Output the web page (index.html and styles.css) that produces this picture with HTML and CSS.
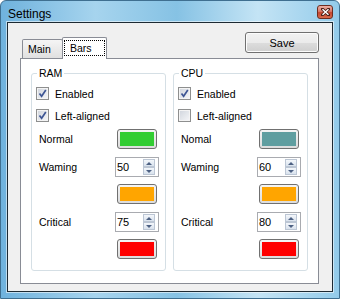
FILE: index.html
```html
<!DOCTYPE html>
<html lang="en">
<head>
  <meta charset="UTF-8" />
  <title>Settings</title>
  <link rel="stylesheet" href="styles.css">
</head>
<body>

  <div class="window">
    <!-- Title Bar -->
    <div class="titlebar">
      <span class="title">Settings</span>
      <span class="close">
        <svg width="9" height="8" viewBox="0 0 9 8">
          <path d="M1.5 1.2 L7.5 6.8 M7.5 1.2 L1.5 6.8" stroke="#4a1c14" stroke-width="3" stroke-linecap="square"/>
          <path d="M1.5 1.2 L7.5 6.8 M7.5 1.2 L1.5 6.8" stroke="#fff" stroke-width="1.5"/>
        </svg>
      </span>
    </div>

    <div class="client">
      <div class="top-row">
        <div class="tabs">
          <div class="tab">Main</div>
          <div class="tab active"><span class="focus">Bars</span></div>
        </div>
        <button class="btn-save">Save</button>
      </div>

      <div class="tab-page">
        <!-- RAM -->
        <fieldset class="group">
          <legend>RAM</legend>
          <div class="group-body">
            <div class="check-row">
              <span class="cb"><svg width="11" height="11" viewBox="0 0 11 11"><path d="M2.5 5.5 L4.6 8.2 L8.8 2" fill="none" stroke="#3d5594" stroke-width="1.7"/></svg></span>
              <span>Enabled</span>
            </div>
            <div class="check-row">
              <span class="cb"><svg width="11" height="11" viewBox="0 0 11 11"><path d="M2.5 5.5 L4.6 8.2 L8.8 2" fill="none" stroke="#3d5594" stroke-width="1.7"/></svg></span>
              <span>Left-aligned</span>
            </div>
            <div class="field">
              <span class="lbl">Normal</span>
              <span class="swatch"><span class="fill green"></span></span>
            </div>
            <div class="field spin-row">
              <span class="lbl">Waming</span>
              <span class="spin"><span class="val">50</span><span class="arrows"><span class="arrow up"></span><span class="arrow down"></span></span></span>
            </div>
            <div class="field">
              <span></span>
              <span class="swatch"><span class="fill orange"></span></span>
            </div>
            <div class="field spin-row">
              <span class="lbl">Critical</span>
              <span class="spin"><span class="val">75</span><span class="arrows"><span class="arrow up"></span><span class="arrow down"></span></span></span>
            </div>
            <div class="field">
              <span></span>
              <span class="swatch"><span class="fill red"></span></span>
            </div>
          </div>
        </fieldset>

        <!-- CPU -->
        <fieldset class="group">
          <legend>CPU</legend>
          <div class="group-body">
            <div class="check-row">
              <span class="cb"><svg width="11" height="11" viewBox="0 0 11 11"><path d="M2.5 5.5 L4.6 8.2 L8.8 2" fill="none" stroke="#3d5594" stroke-width="1.7"/></svg></span>
              <span>Enabled</span>
            </div>
            <div class="check-row">
              <span class="cb"></span>
              <span>Left-aligned</span>
            </div>
            <div class="field">
              <span class="lbl">Nomal</span>
              <span class="swatch"><span class="fill teal"></span></span>
            </div>
            <div class="field spin-row">
              <span class="lbl">Waming</span>
              <span class="spin"><span class="val">60</span><span class="arrows"><span class="arrow up"></span><span class="arrow down"></span></span></span>
            </div>
            <div class="field">
              <span></span>
              <span class="swatch"><span class="fill orange"></span></span>
            </div>
            <div class="field spin-row">
              <span class="lbl">Critical</span>
              <span class="spin"><span class="val">80</span><span class="arrows"><span class="arrow up"></span><span class="arrow down"></span></span></span>
            </div>
            <div class="field">
              <span></span>
              <span class="swatch"><span class="fill red"></span></span>
            </div>
          </div>
        </fieldset>
      </div>
    </div>
  </div>

</body>
</html>
```

FILE: styles.css
```css
* {
  box-sizing: border-box;
  margin: 0;
  padding: 0;
}

body {
  font-family: "Liberation Sans", Arial, sans-serif;
  font-size: 10.5px;
  color: #000;
  background: #fff;
}

/* Window frame */
.window {
  width: 340px;
  height: 299px;
  display: flex;
  flex-direction: column;
  padding: 0 6px 6px;
  border: 1px solid #3f6f90;
  border-radius: 6px 6px 0 0;
  background: linear-gradient(to right, #6fb2dd 0%, #a6d4ee 28%, #86c2e4 52%, #c4e4f5 76%, #93cbea 100%);
}

.titlebar {
  height: 21px;
  display: flex;
  justify-content: space-between;
  align-items: flex-start;
  padding-left: 1px;
}

.title {
  font-size: 12px;
  line-height: 14px;
  padding-top: 6px;
}

.close {
  margin-top: 4px;
  width: 16px;
  height: 14px;
  border: 1px solid #6e2c20;
  border-radius: 3px;
  background: linear-gradient(#eab0a4 0%, #d9796a 45%, #c5462f 55%, #d86a4c 100%);
  display: flex;
  align-items: center;
  justify-content: center;
}

.client {
  flex: 1;
  display: flex;
  flex-direction: column;
  padding: 9px 13px 7px 12px;
  background: #f0f0f0;
  border: 1px solid #1d2a33;
  box-shadow: 0 0 0 1px rgba(255, 255, 255, 0.55);
}

/* Tabs + save */
.top-row {
  display: flex;
  justify-content: space-between;
  align-items: flex-start;
}

.tabs {
  display: flex;
  align-items: flex-end;
  height: 21px;
  margin-top: 5px;
  padding-left: 2px;
}

.tab {
  width: 41px;
  height: 19px;
  padding: 0 5px;
  line-height: 18px;
  border: 1px solid #898c95;
  border-bottom: none;
  border-radius: 2px 2px 0 0;
  background: linear-gradient(#f5f5f5, #e0e0e0);
}

.tab.active {
  position: relative;
  z-index: 1;
  width: 45px;
  height: 22px;
  margin-left: -1px;
  margin-bottom: -1px;
  padding: 2px 0 0 1px;
  background: #fff;
}

.focus {
  display: block;
  width: 41px;
  height: 16px;
  padding-left: 5px;
  line-height: 14px;
  border: 1px dotted #000;
}

.btn-save {
  width: 74px;
  height: 21px;
  font: inherit;
  font-size: 11px;
  border: 1px solid #707070;
  border-radius: 3px;
  background: linear-gradient(#f2f2f2 0%, #ebebeb 50%, #dddddd 50%, #cfcfcf 100%);
  box-shadow: inset 0 0 0 1px #fcfcfc;
}

.tab-page {
  flex: 1;
  display: grid;
  grid-template-columns: 135px 135px;
  column-gap: 7px;
  align-items: start;
  padding: 7px 10px 0;
  border: 1px solid #898c95;
  background: #fff;
}

/* Group boxes */
.group {
  min-width: 0;
  border: 1px solid #d5dfe5;
  border-radius: 3px;
}

.group legend {
  margin-left: 5px;
  padding: 0 2px;
  line-height: 15px;
}

.group-body {
  display: flex;
  flex-direction: column;
  padding: 6px 6px 11px 4px;
}

.check-row {
  display: flex;
  align-items: center;
  gap: 6px;
  height: 13px;
}

.check-row + .check-row {
  margin-top: 9px;
}

.cb {
  width: 13px;
  height: 13px;
  border: 1px solid #8e8f8f;
  background: linear-gradient(135deg, #cfd4dc, #f6f7f9);
  box-shadow: inset 0 0 0 1px #f4f4f4;
}

.cb svg {
  display: block;
}

.field {
  display: grid;
  grid-template-columns: 1fr 44px;
  align-items: center;
  height: 20px;
  margin-top: 7px;
}

.field.spin-row {
  margin-top: 8px;
}

.lbl {
  padding-left: 3px;
}

.swatch {
  justify-self: center;
  display: flex;
  width: 40px;
  height: 20px;
  padding: 2px;
  border: 1px solid #707070;
  border-radius: 3px;
  background: linear-gradient(#f4f4f4, #dcdcdc);
}

.fill {
  flex: 1;
}

.green { background: #32cd32; }
.teal { background: #5f9ea0; }
.orange { background: #ffa500; }
.red { background: #ff0000; }

/* Spin box */
.spin {
  display: flex;
  justify-content: space-between;
  width: 44px;
  height: 20px;
  padding: 1px 3px 1px 1px;
  border: 1px solid #a9abb0;
  background: #fff;
}

.val {
  font-size: 11px;
  line-height: 16px;
}

.arrows {
  display: flex;
  flex-direction: column;
}

.arrow {
  width: 12px;
  height: 8px;
  display: flex;
  align-items: center;
  justify-content: center;
  border: 1px solid #bcc6d4;
  background: linear-gradient(#f4f7fb, #d9e2ed);
}

.arrow::after {
  content: "";
  border-left: 3px solid transparent;
  border-right: 3px solid transparent;
}

.arrow.up::after {
  border-bottom: 3px solid #4d6183;
}

.arrow.down::after {
  border-top: 3px solid #4d6183;
}
```
